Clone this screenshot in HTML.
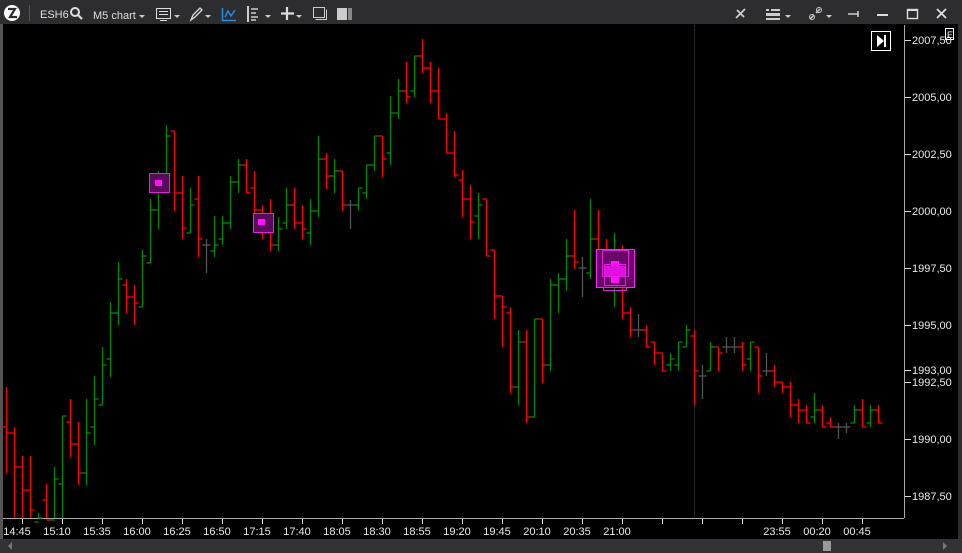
<!DOCTYPE html>
<html><head><meta charset="utf-8"><style>
html,body{margin:0;padding:0;background:#2d2d30;width:962px;height:553px;overflow:hidden;font-family:"Liberation Sans",sans-serif}
</style></head><body>
<svg id="s" width="962" height="553" xmlns="http://www.w3.org/2000/svg" style="position:absolute;left:0;top:0">
<rect x="0" y="0" width="962" height="553" fill="#2d2d30"/>
<rect x="0" y="24" width="959" height="515" fill="#000"/>
<rect x="0" y="24" width="3" height="515" fill="#555"/>
<rect x="958" y="24" width="4" height="515" fill="#2d2d30"/>
<line x1="694.5" y1="25" x2="694.5" y2="518" stroke="#262626"/>
<line x1="904.5" y1="25" x2="904.5" y2="518" stroke="#aaa"/>
<line x1="3" y1="518.5" x2="904" y2="518.5" stroke="#aaa"/>
<g id="bars" stroke-width="1.3" fill="none"></g>
<g id="ax" fill="#e8e8e8" font-size="11"></g>
<rect x="149.5" y="173.5" width="20" height="19" fill="#5a0a5a" stroke="#e020e0"/>
<rect x="155" y="180" width="7" height="6" fill="#ff10ff"/>
<rect x="253.5" y="213.5" width="20" height="19" fill="#5a0a5a" stroke="#e020e0"/>
<rect x="258" y="219" width="7" height="6" fill="#ff10ff"/>
<rect x="596.5" y="249.5" width="38" height="38" fill="#6a086a" stroke="#ff20ff"/>
<rect x="602.5" y="250.5" width="26" height="26" fill="none" stroke="#e020e0"/>
<rect x="604.5" y="264.5" width="21" height="21" fill="none" stroke="#e020e0"/>
<rect x="603.5" y="287.5" width="23" height="3" fill="none" stroke="#e020e0"/>
<rect x="611" y="261" width="8" height="22" fill="#ff10ff"/>
<rect x="605" y="266" width="20" height="10" fill="#e010e0"/>
<rect x="871.5" y="31.5" width="19" height="19" fill="#000" stroke="#fff"/>
<path d="M877 35 L884 41 L877 47 Z" fill="#fff"/><rect x="884" y="35" width="2" height="12" fill="#fff"/>
<rect x="945.5" y="28.5" width="8" height="11" fill="none" stroke="#fff"/>
<text x="947" y="38" fill="#fff" font-size="9">E</text>
<rect x="0" y="539" width="962" height="14" fill="#333337"/>
<path d="M12 542 L8 546 L12 550Z" fill="#777"/>
<path d="M943 542 L947 546 L943 550Z" fill="#777"/>
<rect x="823" y="541" width="8" height="10" fill="#999"/>
<circle cx="12" cy="13" r="8" fill="#fff"/>
<path d="M8 9 H15 L10 17 H17" stroke="#2d2d30" stroke-width="2.2" fill="none"/>
<line x1="29.5" y1="5" x2="29.5" y2="21" stroke="#555"/>
<g fill="#ddd" font-size="11">
<text x="40" y="18">ESH6</text>
<text x="93" y="19">M5 chart</text>
</g>
<circle cx="75" cy="12" r="4" fill="none" stroke="#ddd" stroke-width="2"/><line x1="78" y1="15" x2="82" y2="19" stroke="#ddd" stroke-width="2.2"/>
<g fill="#ccc">
<path d="M139 15 l3 3 l3 -3z"/><path d="M174 15 l3 3 l3 -3z"/><path d="M205 15 l3 3 l3 -3z"/>
<path d="M265 15 l3 3 l3 -3z"/><path d="M296 15 l3 3 l3 -3z"/><path d="M785 15 l3 3 l3 -3z"/><path d="M826 15 l3 3 l3 -3z"/>
</g>
<rect x="156.5" y="8.5" width="14" height="10" fill="none" stroke="#ddd"/><line x1="159" y1="11.5" x2="168" y2="11.5" stroke="#ddd"/><line x1="159" y1="14.5" x2="168" y2="14.5" stroke="#ddd"/><line x1="160" y1="20.5" x2="167" y2="20.5" stroke="#ddd"/>
<path d="M191 20 L193 15 L200 8 L202 10 L195 17 Z" fill="none" stroke="#ddd" stroke-width="1.3"/>
<path d="M222.5 8 V20.5 H236" fill="none" stroke="#2a8ae0" stroke-width="1.5"/><path d="M225 17 L228 11 L231 16 L235 10" fill="none" stroke="#2a8ae0" stroke-width="1.5"/>
<rect x="247" y="6" width="2" height="16" fill="#ccc"/><g stroke="#ccc" stroke-width="1.5"><line x1="251" y1="9" x2="258" y2="9"/><line x1="251" y1="13" x2="256" y2="13"/><line x1="251" y1="17" x2="258" y2="17"/><line x1="251" y1="20" x2="256" y2="20"/></g>
<path d="M287 7 V20 M281 13.5 H294" stroke="#ddd" stroke-width="2.2"/>
<rect x="313.5" y="7.5" width="11" height="10" fill="none" stroke="#ccc"/><path d="M315.5 19.5 H326.5 V9.5" fill="none" stroke="#ccc"/>
<rect x="337" y="8" width="10" height="12" fill="#ccc"/><rect x="348" y="8" width="4" height="12" fill="#888"/>
<path d="M736 18 L745 9 M737 10 L744 17" stroke="#ccc" stroke-width="1.8"/>
<rect x="766" y="9" width="3" height="2" fill="#ccc"/><rect x="771" y="9" width="9" height="2" fill="#ccc"/><rect x="766" y="13" width="14" height="3" fill="#ccc"/><rect x="766" y="18" width="14" height="2" fill="#ccc"/>
<path d="M810 19 l4 -4 M816 13 l4 -4" stroke="#ccc" stroke-width="1.5"/><circle cx="812" cy="17" r="2.5" fill="none" stroke="#ccc"/><circle cx="819" cy="10" r="2.5" fill="none" stroke="#ccc"/>
<path d="M848 14 H858 M858 11 V17" stroke="#ccc" stroke-width="1.6"/>
<rect x="877" y="14" width="11" height="2" fill="#ddd"/>
<rect x="907.5" y="9.5" width="10" height="9" fill="none" stroke="#ddd" stroke-width="1.4"/><rect x="907" y="9" width="11" height="2" fill="#ddd"/>
<path d="M937 9 L946 18 M946 9 L937 18" stroke="#ddd" stroke-width="1.8"/>
</svg>
<script>
var B=[[6.5,387,473,427,433],[14.5,427,525,433,467],[22.5,456,525,467,490],[30.5,456,525,490,510],[38.5,513,525,522,518],[46.5,484,525,500,520],[54.5,467,525,520,479],[62.5,416,525,484,416],[70.5,399,457,422,444],[78.5,422,485,444,473],[86.5,399,485,473,433],[94.5,376,445,427,399],[102.5,347,405,405,365],[110.5,302,377,359,313],[118.5,262,325,313,279],[126.5,279,313,285,297],[134.5,285,325,297,303],[142.5,250,307,307,256],[150.5,199,263,263,210],[158.5,171,229,210,177],[166.5,125,183,177,136],[174.5,131,211,131,193],[182.5,176,239,193,228],[190.5,188,233,233,205],[198.5,176,257,199,239],[206.5,239,273,245,245],[214.5,216,257,251,245],[222.5,216,245,239,223],[230.5,176,229,223,182],[238.5,159,193,182,165],[246.5,159,193,165,193],[254.5,171,217,188,210],[262.5,205,239,210,228],[270.5,199,251,228,245],[278.5,217,251,245,229],[286.5,188,229,223,205],[294.5,188,229,205,223],[302.5,205,239,223,229],[310.5,199,245,233,211],[318.5,136,217,211,159],[326.5,153,189,159,176],[334.5,159,193,176,171],[342.5,171,211,171,205],[350.5,200,229,205,205],[358.5,188,211,205,188],[366.5,165,199,193,165],[374.5,136,171,165,136],[382.5,136,177,136,159],[390.5,96,165,153,113],[398.5,79,119,113,91],[406.5,62,103,91,97],[414.5,56,97,91,56],[422.5,39,73,56,68],[430.5,62,103,68,91],[438.5,68,119,91,119],[446.5,113,153,119,153],[454.5,131,177,153,175],[462.5,170,217,180,199],[470.5,185,239,199,222],[478.5,193,239,216,205],[486.5,199,256,199,256],[494.5,250,319,250,296],[502.5,296,347,296,307],[510.5,307,393,313,387],[518.5,330,405,387,342],[526.5,330,423,342,417],[534.5,319,417,417,319],[542.5,319,383,319,365],[550.5,279,371,365,285],[558.5,273,313,285,279],[566.5,239,291,279,256],[574.5,210,269,256,262],[582.5,257,297,268,268],[590.5,199,279,273,239],[598.5,210,263,239,250],[606.5,239,283,250,265],[614.5,233,307,283,263],[622.5,245,319,262,313],[630.5,307,337,313,330],[638.5,314,337,330,330],[646.5,325,347,330,347],[654.5,342,365,342,353],[662.5,353,371,353,371],[670.5,353,371,365,359],[678.5,342,371,365,342],[686.5,325,347,347,330],[694.5,330,405,336,371],[702.5,365,399,376,376],[710.5,342,371,371,347],[718.5,347,371,347,353],[726.5,337,353,347,347],[734.5,337,353,347,347],[742.5,342,371,347,365],[750.5,342,371,359,342],[758.5,347,393,347,376],[766.5,353,376,371,371],[774.5,365,387,371,382],[782.5,382,393,382,387],[790.5,382,417,387,405],[798.5,399,423,405,410],[806.5,405,423,410,423],[814.5,393,423,417,410],[822.5,405,427,410,427],[830.5,417,427,423,427],[838.5,423,439,427,427],[846.5,423,433,427,427],[854.5,405,423,423,410],[862.5,399,427,410,427],[870.5,405,427,423,410],[878.5,405,423,410,423]];
var h='';B.forEach(function(b){var x=b[0],c=b[4]>b[3]+0.5?'#ff0000':(b[4]<b[3]-0.5?'#008a00':'#555');
h+='<line x1="'+x+'" y1="'+b[1]+'" x2="'+x+'" y2="'+Math.min(b[2],518)+'" stroke="'+c+'"/>';
h+='<line x1="'+(x-4)+'" y1="'+b[3]+'" x2="'+x+'" y2="'+b[3]+'" stroke="'+c+'"/>';
h+='<line x1="'+x+'" y1="'+b[4]+'" x2="'+(x+4)+'" y2="'+b[4]+'" stroke="'+c+'"/>';});
document.getElementById('bars').innerHTML=h;
var a='',P=[[40,'2007,50'],[97,'2005,00'],[154,'2002,50'],[211,'2000,00'],[268,'1997,50'],[325,'1995,00'],[370,'1993,00'],[382,'1992,50'],[439,'1990,00'],[496,'1987,50']];
P.forEach(function(p){a+='<line x1="905" y1="'+(p[0]+0.5)+'" x2="911" y2="'+(p[0]+0.5)+'" stroke="#ddd"/><text x="912" y="'+(p[0]+4)+'">'+p[1]+'</text>';});
var T=['14:45','15:10','15:35','16:00','16:25','16:50','17:15','17:40','18:05','18:30','18:55','19:20','19:45','20:10','20:35','21:00','','','23:55','00:20','00:45'];
for(var i=0;i<22;i++){var x=22.5+40*i;a+='<line x1="'+x+'" y1="519" x2="'+x+'" y2="524" stroke="#ddd"/>';}
T.forEach(function(t,i){if(t){var x=i<16?17+40*i:777+40*(i-18);a+='<text x="'+x+'" y="535" text-anchor="middle">'+t+'</text>';}});
document.getElementById('ax').innerHTML=a;
</script>
</body></html>
